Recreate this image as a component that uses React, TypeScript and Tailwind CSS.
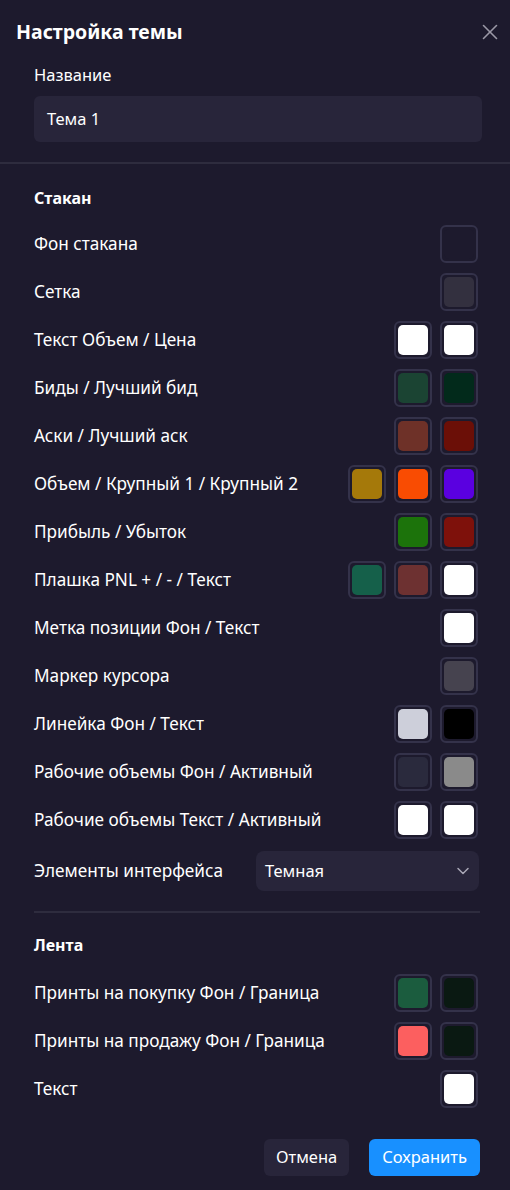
import { X, ChevronDown } from "lucide-react";

type Row = { label: string; colors: string[] };

const stakanRows: Row[] = [
  { label: "Фон стакана", colors: ["#1d1a2d"] },
  { label: "Сетка", colors: ["#33303f"] },
  { label: "Текст Объем / Цена", colors: ["#ffffff", "#ffffff"] },
  { label: "Биды / Лучший бид", colors: ["#1b4433", "#022a1b"] },
  { label: "Аски / Лучший аск", colors: ["#6e3128", "#6b0f07"] },
  { label: "Объем / Крупный 1 / Крупный 2", colors: ["#a5790a", "#f94c02", "#5a00e0"] },
  { label: "Прибыль / Убыток", colors: ["#1c730b", "#7e110b"] },
  { label: "Плашка PNL + / - / Текст", colors: ["#15604a", "#6d3131", "#ffffff"] },
  { label: "Метка позиции Фон / Текст", colors: ["#ffffff"] },
  { label: "Маркер курсора", colors: ["#46434f"] },
  { label: "Линейка Фон / Текст", colors: ["#cdcfda", "#000000"] },
  { label: "Рабочие объемы Фон / Активный", colors: ["#2a2a3d", "#8a8a8a"] },
  { label: "Рабочие объемы Текст / Активный", colors: ["#ffffff", "#ffffff"] },
];

const lentaRows: Row[] = [
  { label: "Принты на покупку Фон / Граница", colors: ["#1b5c3e", "#0a1912"] },
  { label: "Принты на продажу Фон / Граница", colors: ["#fc5f5f", "#0a1912"] },
  { label: "Текст", colors: ["#ffffff"] },
];

function Swatch({ color }: { color: string }) {
  return (
    <div className="w-[38px] h-[38px] rounded-[6px] border-2 border-[#34324a] p-[2px]">
      <div className="w-full h-full rounded-[5px]" style={{ backgroundColor: color }} />
    </div>
  );
}

function ColorRow({ row }: { row: Row }) {
  return (
    <div className="flex items-center justify-between h-[38px] pr-[2px]">
      <span className="text-[17.2px] text-white">{row.label}</span>
      <div className="flex gap-[8px]">
        {row.colors.map((c, i) => (
          <Swatch key={i} color={c} />
        ))}
      </div>
    </div>
  );
}

export default function App() {
  return (
    <div
      className="w-[510px] h-[1190px] bg-[#1d1a2d] text-white flex flex-col"
      style={{ fontFamily: '"Noto Sans", "Liberation Sans", sans-serif' }}
    >
      <div className="flex items-center justify-between pl-4 pr-[7px] pt-[19px]">
        <h1 className="text-[19.5px] font-bold leading-[26px]">Настройка темы</h1>
        <X className="w-[26px] h-[26px] text-[#9a98a6]" strokeWidth={1.5} />
      </div>

      <div className="pl-[34px] pr-[28px] pt-[19px]">
        <div className="text-[16.5px] leading-[22px]">Название</div>
        <div className="mt-[10px] h-[46px] rounded-[6px] bg-[#28253a] flex items-center px-[13px] text-[16.5px]">
          Тема 1
        </div>
      </div>

      <div className="mt-[20px] h-[2px] bg-[#2e2c3e]" />

      <div className="pl-[34px] pr-[30px] pt-[23px] flex flex-col">
        <h2 className="text-[16px] font-bold leading-[22px]">Стакан</h2>
        <div className="mt-[16px] flex flex-col gap-[10px]">
          {stakanRows.map((r) => (
            <ColorRow key={r.label} row={r} />
          ))}
        </div>

        <div className="mt-[12px] flex items-center justify-between">
          <span className="text-[17.2px]">Элементы интерфейса</span>
          <div className="w-[223px] h-[40px] rounded-[8px] bg-[#28253a] flex items-center justify-between pl-[9px] pr-[6px] mr-[1px]">
            <span className="text-[16.5px]">Темная</span>
            <ChevronDown className="w-[20px] h-[20px] text-[#a9a7b6]" strokeWidth={1.8} />
          </div>
        </div>

        <div className="mt-[20px] h-[2px] bg-[#2e2c3e]" />

        <h2 className="mt-[21px] text-[16px] font-bold leading-[22px]">Лента</h2>
        <div className="mt-[18px] flex flex-col gap-[10px]">
          {lentaRows.map((r) => (
            <ColorRow key={r.label} row={r} />
          ))}
        </div>

        <div className="mt-[31px] flex justify-end gap-[20px]">
          <button className="h-[37px] px-[12px] rounded-[6px] bg-[#28253a] text-[16.5px] text-white">
            Отмена
          </button>
          <button className="h-[37px] px-[13px] rounded-[6px] bg-[#1890ff] text-[16.5px] text-white">
            Сохранить
          </button>
        </div>
      </div>
    </div>
  );
}
